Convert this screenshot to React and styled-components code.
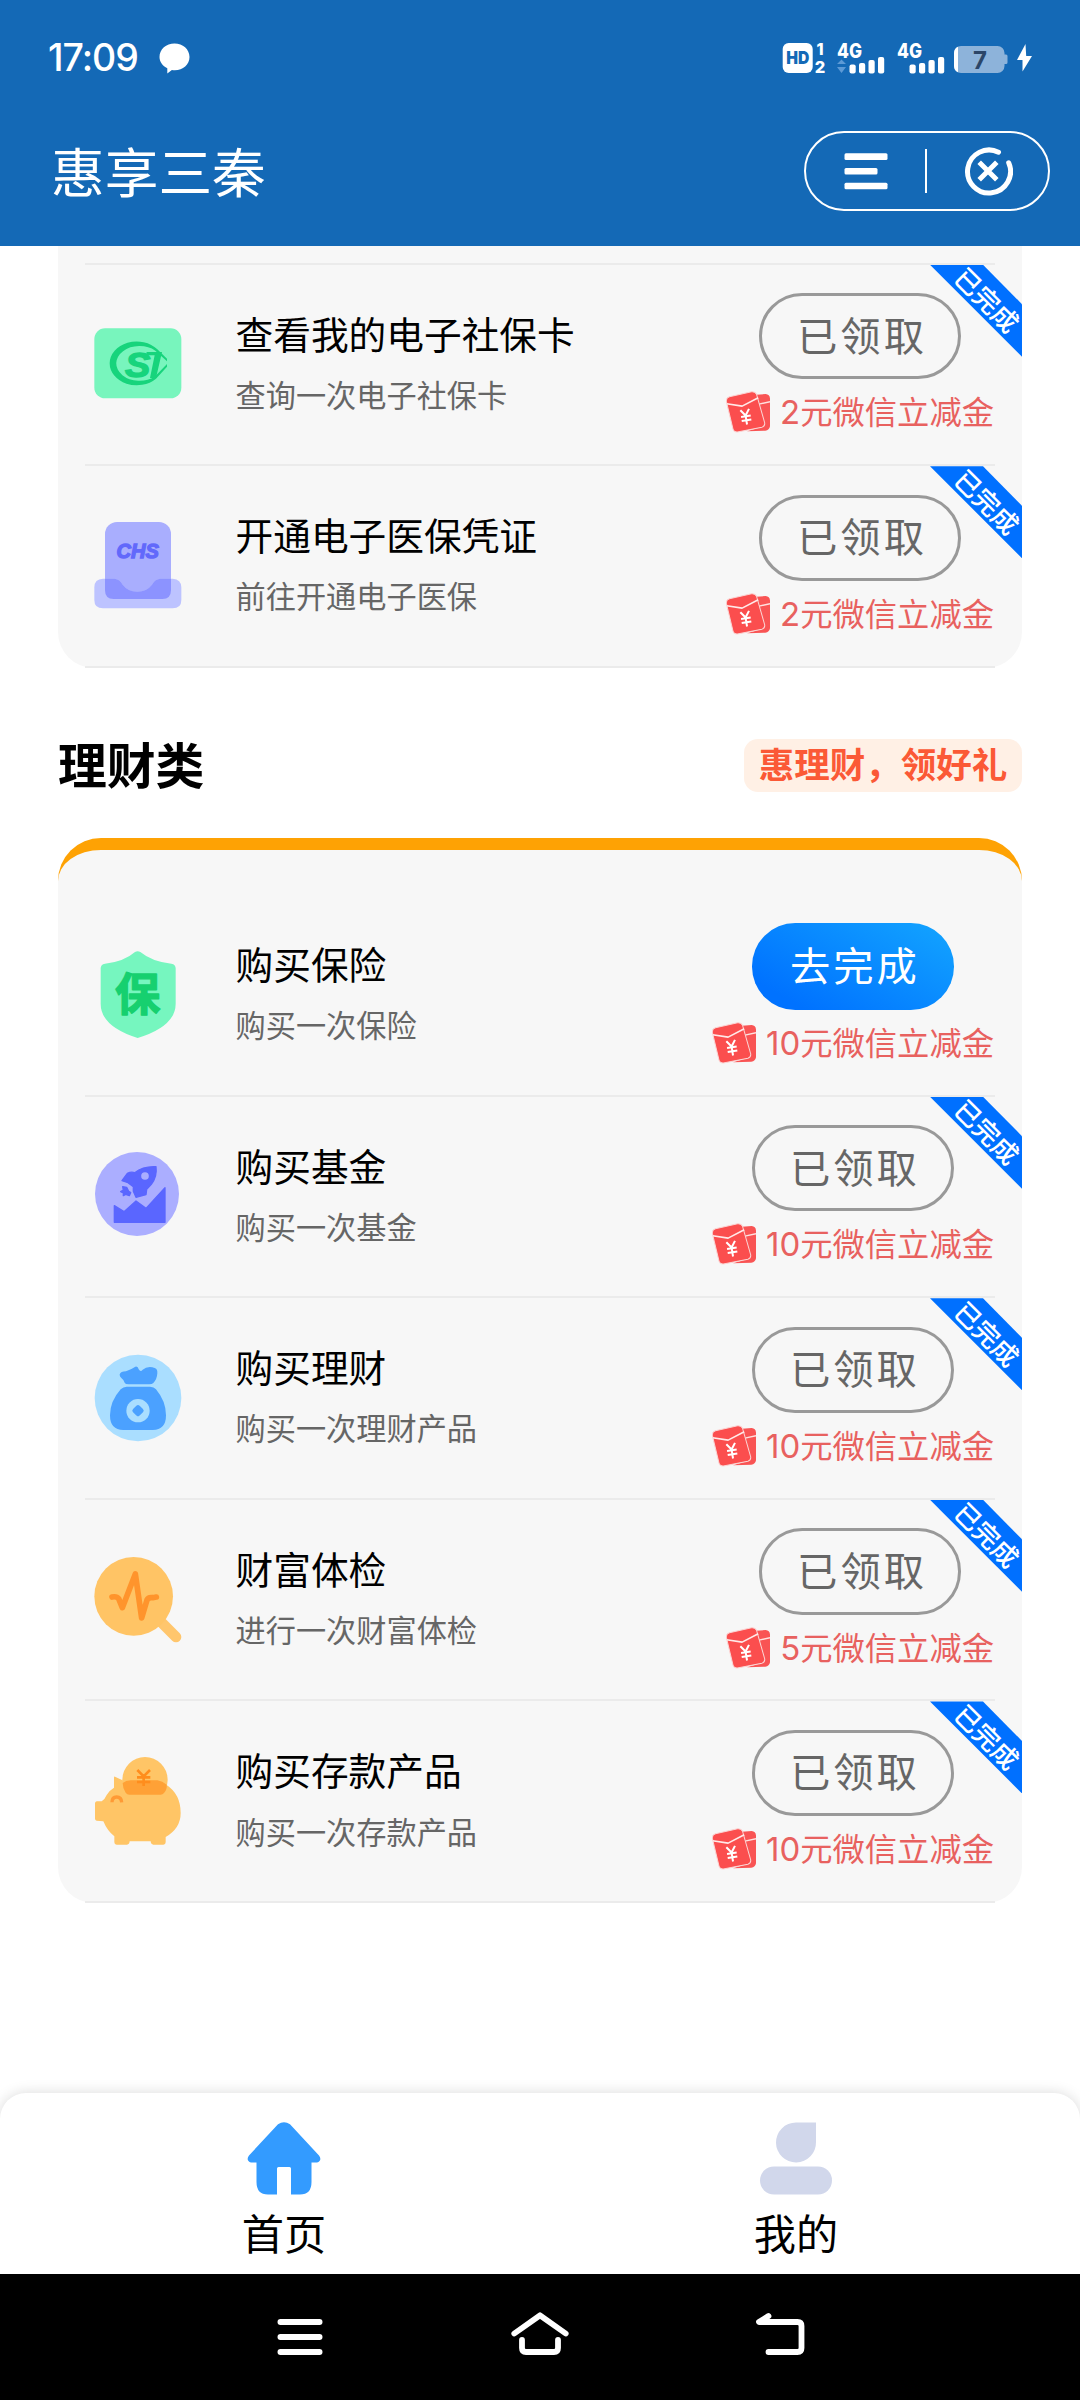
import React from "react";
import styled, { createGlobalStyle } from "styled-components";

const GlobalStyle = createGlobalStyle`
  * { box-sizing: border-box; }
  html, body { margin: 0; padding: 0; background: #fff; }
  body { font-family: "Noto Sans CJK SC", "Noto Sans", sans-serif; color: #000; }
  svg { display: block; flex: none; }
`;

const Screen = styled.div`
  width: 1080px;
  height: 2400px;
  display: flex;
  flex-direction: column;
  overflow: hidden;
  background: #fff;
`;

/* ---------- header ---------- */

const Header = styled.header`
  flex: none;
  height: 246px;
  background: #1469b6;
  color: #fff;
  display: flex;
  flex-direction: column;
`;

const StatusBar = styled.div`
  height: 116px;
  padding: 0 48px 0 48px;
  display: flex;
  align-items: center;
  justify-content: space-between;
`;

const StatusGroup = styled.div`
  display: flex;
  align-items: center;
  gap: ${(p) => p.$gap || 0}px;
`;

const Clock = styled.span`
  width: 91px;
  font: 500 37.5px/44px Inter, sans-serif;
  letter-spacing: -1px;
  white-space: nowrap;
`;

const TitleBar = styled.div`
  height: 130px;
  padding: 15px 30px 0 51px;
  display: flex;
  align-items: flex-start;
  justify-content: space-between;
`;

const AppTitle = styled.h1`
  margin: 0;
  padding-top: 1px;
  font-weight: 400;
  font-size: 53.7px;
  line-height: 76px;
`;

const Capsule = styled.div`
  width: 246px;
  height: 80px;
  border: 2px solid #fff;
  border-radius: 40px;
  display: flex;
  align-items: center;
  padding: 0 35px 0 38px;
  justify-content: space-between;
`;

const CapsuleDivider = styled.span`
  width: 2px;
  height: 44px;
  background: #fff;
`;

/* ---------- content ---------- */

const Content = styled.main`
  flex: 1;
  min-height: 0;
  padding: 0 58px;
  display: flex;
  flex-direction: column;
`;

const Card = styled.section`
  flex: none;
  background: #f7f7f7;
  padding-top: ${(p) => p.$top}px;
  border-radius: ${(p) => (p.$accent ? "43px 43px 36px 36px" : "0 0 36px 36px")};
  border-top: ${(p) => (p.$accent ? "12px solid #fea204" : "0")};
`;

const TopRule = styled.div`
  height: 2px;
  margin: 0 27px;
  background: #ebebeb;
`;

const SectionHead = styled.div`
  flex: none;
  height: 170px;
  padding-top: 26px;
  display: flex;
  align-items: center;
  justify-content: space-between;
`;

const SectionTitle = styled.h2`
  margin: -6px 0 0;
  font-size: 48.8px;
  line-height: 70px;
  font-weight: 700;
`;

const Slogan = styled.span`
  width: 278px;
  height: 53px;
  border-radius: 14px;
  background: #fff0e5;
  color: #fb5936;
  font-size: 35.5px;
  line-height: 48px;
  font-weight: 700;
  text-align: center;
  white-space: nowrap;
`;

const Row = styled.article`
  position: relative;
  height: 201.6px;
  padding: 0 27px;
`;

const RowBody = styled.div`
  height: 100%;
  padding: 0 1px 0 9px;
  border-bottom: 2px solid #ebebeb;
  display: flex;
  align-items: flex-start;
`;

const IconBox = styled.div`
  width: 88px;
  height: 88px;
  margin: 55.8px 53.5px 0 0;
`;

const TaskText = styled.div`
  flex: 1;
  padding-top: 41px;
  display: flex;
  flex-direction: column;
  gap: 12.2px;
  white-space: nowrap;
`;

const TaskTitle = styled.div`
  font-size: 37.7px;
  line-height: 54px;
`;

const TaskHint = styled.div`
  font-size: 30.2px;
  line-height: 44px;
  color: #666;
`;

const Action = styled.div`
  padding-top: 28.4px;
  display: flex;
  flex-direction: column;
  align-items: center;
`;

const Pill = styled.button`
  width: 202px;
  height: 86.4px;
  padding: 0 0 5px 4px;
  border-radius: 43.2px;
  border: ${(p) => (p.$done ? "3px solid #999" : "0")};
  background: ${(p) => (p.$done ? "transparent" : "linear-gradient(30deg, #0072ff 15%, #12a2ff 95%)")};
  color: ${(p) => (p.$done ? "#666" : "#fff")};
  font-family: inherit;
  font-size: 40.3px;
  line-height: 1;
  letter-spacing: 3px;
  display: flex;
  align-items: center;
  justify-content: center;
`;

const Reward = styled.div`
  margin-top: 10px;
  height: 46px;
  display: flex;
  align-items: center;
  gap: 10px;
  color: #e8615f;
  font-size: 32.3px;
  line-height: 46px;
  white-space: nowrap;
`;

const RewardText = styled.span`
  margin-top: -2px;
`;

const Amount = styled.span`
  font-family: Inter, sans-serif;
  font-size: 33px;
`;

const Ribbon = styled.div`
  position: absolute;
  top: 0;
  right: 0;
  width: 92px;
  height: 92px;
  display: flex;

  &::before {
    content: "";
    position: absolute;
    inset: 0;
    background: #0070ff;
    clip-path: polygon(0 0, 53px 0, 92px 39.5px, 92px 92px);
  }
`;

const RibbonLabel = styled.span`
  position: absolute;
  left: 16.8px;
  top: 16.5px;
  width: 80px;
  height: 38px;
  color: #fff;
  font-size: 26px;
  font-weight: 500;
  line-height: 36px;
  text-align: center;
  white-space: nowrap;
  transform: rotate(45deg);
`;

/* ---------- bottom bars ---------- */

const TabBar = styled.nav`
  flex: none;
  height: 181px;
  padding: 29px 28px 0;
  border-radius: 26px 26px 0 0;
  background: #fff;
  box-shadow: 0 0 14px rgba(0, 0, 0, 0.15);
  display: flex;
`;

const Tab = styled.a`
  flex: 1;
  display: flex;
  flex-direction: column;
  align-items: center;
  gap: 6.5px;
  font-size: 42.2px;
  line-height: 60px;
`;

const SystemBar = styled.footer`
  flex: none;
  height: 126px;
  background: #000;
  display: flex;
  justify-content: center;
  align-items: flex-start;
  gap: 180px;
  padding-top: 32px;
`;

/* ---------- drawings ---------- */

const ChatBubble = () => (
  <svg width="31" height="31" viewBox="0 0 31 31">
    <path fill="#fff" d="M15.500 .5C23.800 .5 30.500 6.300 30.500 14S24 27.200 15.800 27.200c-1 0-2-.1-2.900-.3L8.300 30.600V25.300C3.600 23 .5 18.800 .5 14 .5 6.300 7.200 .5 15.500 .5z" />
  </svg>
);

const HdBadge = () => (
  <svg width="48" height="50" viewBox="0 -8 48 50">
    <rect x="0.700" y="2" width="30" height="30" rx="6" fill="#fff" />
    <text x="15.700" y="23.300" textAnchor="middle" fontFamily="Inter" fontWeight="900" fontSize="17.500" textLength="23" lengthAdjust="spacingAndGlyphs" fill="#1469b6">HD</text>
    <text x="38" y="14" textAnchor="middle" fontFamily="Inter" fontWeight="800" fontSize="16" fill="#fff">1</text>
    <text x="38" y="31.800" textAnchor="middle" fontFamily="Inter" fontWeight="800" fontSize="16.500" fill="#fff">2</text>
  </svg>
);

const Signal = ({ data }) => (
  <svg width="50" height="50" viewBox="0 -8 50 50">
    <text x="0" y="17" fontFamily="Inter" fontWeight="800" fontSize="20.500" textLength="25" lengthAdjust="spacingAndGlyphs" fill="#fff">4G</text>
    <g fill="#fff">
      <rect x="12.500" y="23.500" width="6.200" height="9" rx="2" />
      <rect x="22" y="22" width="6.200" height="10.500" rx="2" />
      <rect x="31.500" y="19" width="6.200" height="13.500" rx="2" />
      <rect x="41" y="16" width="6.200" height="16.500" rx="2" />
    </g>
    {data && <path fill="#5d9ad6" d="M4.500 18.500l4.500 4.500H0zM4.500 32l4.500-6H0z" />}
  </svg>
);

const Battery = () => (
  <svg width="56" height="34" viewBox="0 0 56 34">
    <path fill="#8db3da" d="M7 5H43.500a7 7 0 0 1 7 7v1.500h1.500a1.500 1.500 0 0 1 1.500 1.500v6.500a1.500 1.500 0 0 1-1.500 1.500H50.500V25a7 7 0 0 1-7 7H7a7 7 0 0 1-7-7V12A7 7 0 0 1 7 5z" />
    <path fill="#fff" d="M4 5.700V31.300A7 7 0 0 1 0 25V12A7 7 0 0 1 4 5.700z" />
    <text x="26" y="27.500" textAnchor="middle" fontFamily="Inter" fontWeight="700" fontSize="24" fill="#2b4668">7</text>
  </svg>
);

const Bolt = () => (
  <svg width="15" height="28" viewBox="0 0 15 28">
    <path fill="#fff" d="M8.500 0L0 16h5.500v11.500L15 12H9.200z" />
  </svg>
);

const MenuLines = () => (
  <svg width="44" height="37" viewBox="0 0 44 37">
    <g fill="#fff">
      <rect x="0.500" y="0.300" width="43" height="6.600" rx="1.500" />
      <rect x="0.500" y="15" width="33" height="6.600" rx="1.500" />
      <rect x="0.500" y="29.700" width="43" height="6.600" rx="1.500" />
    </g>
  </svg>
);

const CloseRing = () => (
  <svg width="50" height="50" viewBox="0 0 50 50">
    <g fill="none" stroke="#fff" strokeWidth="5" strokeLinecap="round">
      <path d="M35.500 6.200A21.500 21.500 0 1 0 45.700 16.800" />
      <path strokeLinecap="butt" d="M16.200 16.200L33.800 33.800M33.800 16.200L16.200 33.800" />
    </g>
  </svg>
);

const Icon = ({ children }) => (
  <svg width="88" height="88" viewBox="0 0 264 264">{children}</svg>
);

const SocialCardIcon = () => (
  <Icon>
    <rect x="1" y="25" width="261" height="210" rx="32" fill="#78f5bd" />
    <path fill="#17d47c" fillRule="evenodd" d="M47 130A81 66 0 0 1 190 88L219 116V124L184 92A70 52 0 1 0 182 170L219 132V140L186 176A81 66 0 0 1 47 130z" />
    <text x="93" y="171" fontFamily="Liberation Sans" fontWeight="700" fontStyle="italic" fontSize="104" textLength="76" lengthAdjust="spacingAndGlyphs" stroke="#17d47c" strokeWidth="4" fill="#17d47c">S</text>
    <path fill="#17d47c" d="M158 96H204L186 174H168L182 106H156z" />
  </Icon>
);

const InsuranceTrayIcon = () => (
  <Icon>
    <rect x="33" y="0" width="198" height="231" rx="36" fill="#a9aefe" />
    <path fill="#bdc3ff" d="M27 170H62Q78 172 86 188Q102 209 130 209T174 188Q182 172 198 170H236Q262 172 262 196V234Q262 259 236 259H27Q1 259 1 234V196Q1 171 27 170z" />
    <path fill="#8c93ff" d="M33 170H62Q78 172 86 188Q102 209 130 209T174 188Q182 172 198 170H231V205Q231 231 205 231H59Q33 231 33 205z" />
    <text x="131" y="108" textAnchor="middle" fontFamily="Liberation Sans" fontWeight="700" fontStyle="italic" fontSize="60" stroke="#6269fb" strokeWidth="4" fill="#6269fb">CHS</text>
  </Icon>
);

const ShieldIcon = () => (
  <Icon>
    <path fill="#76f6bf" d="M123 3Q131-1 139 3Q174 32 232 38Q245 40 245 52V158Q245 226 131 261Q20 226 20 158V52Q20 40 33 38Q90 32 123 3z" />
    <text x="131" y="180" textAnchor="middle" fontFamily="Noto Sans CJK SC" fontWeight="700" fontSize="136" stroke="#16d06f" strokeWidth="4" strokeLinejoin="round" fill="#16d06f">保</text>
  </Icon>
);

const RocketIcon = () => (
  <Icon>
    <circle cx="129" cy="126" r="126" fill="#abaeff" />
    <g fill="#5a66ff" stroke="#5a66ff" strokeWidth="4" strokeLinejoin="round">
      <path d="M186 44Q190 74 172 97L158 112L156 128L126 136L118 118L118 104L102 92L84 86L100 64Q112 58 122 62Q148 42 186 44z" />
      <path d="M86 104L98 106L104 118L110 122L106 131L95 127L88 131L88 123L80 119L88 114z" />
      <path d="M61 161L90 179L126 147L156 169L213 107V211H61z" />
    </g>
    <circle cx="153" cy="72" r="11.500" fill="#abaeff" />
  </Icon>
);

const MoneyBagIcon = () => (
  <Icon>
    <circle cx="132" cy="132" r="130" fill="#aadeff" />
    <g fill="#4ba1ff">
      <path d="M77 61Q80 52 96 52Q112 46 124 38Q132 36 134 46Q140 56 146 47Q158 37 175 40Q192 42 190 58Q189 76 178 87Q174 91 166 91H104Q94 91 92 86Q90 78 82 72Q76 67 77 61z" />
      <path d="M98 98H168Q180 98 186 106Q216 142 216 184Q216 228 176 228H88Q48 228 48 184Q48 142 80 106Q88 98 98 98z" />
    </g>
    <circle cx="132" cy="170" r="35" fill="#aadeff" />
    <rect x="118" y="156" width="28" height="28" rx="7" fill="#4ba1ff" transform="rotate(45 132 170)" />
  </Icon>
);

const CheckupIcon = () => (
  <Icon>
    <path d="M196 193L246 243" stroke="#ffc66d" strokeWidth="32" strokeLinecap="round" />
    <circle cx="119" cy="121" r="118" fill="#ffc465" />
    <path fill="none" stroke="#ff942c" strokeWidth="17" strokeLinecap="round" strokeLinejoin="round" d="M54 123Q68 120 74 128L85 155L124 54L143 186L159 132Q163 123 176 125L187 123" />
  </Icon>
);

const PiggyIcon = () => (
  <Icon>
    <circle cx="153" cy="68" r="68" fill="#ffc566" />
    <path fill="#ffc566" d="M63 59L92 73Q100 70 116 70H180Q204 72 218 84Q260 112 260 168Q260 214 215 240V256Q215 263 208 263H178Q171 263 170 253H107Q106 263 99 263H68Q61 263 61 256V238Q40 222 28 193L8 191Q3 190 3 185V139Q3 134 8 133H23Q32 128 38 114Q46 100 60 92V62Q60 58 63 59z" />
    <path fill="#ffa136" d="M86 78Q96 70 110 70H190Q206 72 218 83Q220 97 210 108Q206 113 200 113H106Q99 113 95 107Q86 94 86 78z" />
    <g fill="none" stroke="#ff8d1d" strokeWidth="8">
      <path d="M130 39L149 58L168 39M129 61H169M129 75H169M149 57V87" />
      <path stroke="#ff9a35" strokeWidth="10" d="M54 136Q54 120 68 120T83 136" />
    </g>
  </Icon>
);

const PacketIcon = () => (
  <svg width="44" height="42" viewBox="0 0 131 123">
    <path fill="#f95454" d="M90 10L118 8Q130 9 131 21V104Q129 116 117 117L62 119L106 106Q114 102 112 92z" />
    <path stroke="#ffe1df" strokeWidth="4" fill="none" d="M98 38L131 31" />
    <path fill="#fb4e4e" stroke="#fbd5d4" strokeWidth="3" d="M10 16L76 1Q87 0 91 9L115 93Q117 103 107 107L34 121Q24 122 21 113L1 30Q0 19 10 16z" />
    <path stroke="#ffe9e8" strokeWidth="5" fill="none" strokeLinejoin="round" d="M2 37L48 44L96 19" />
    <g transform="rotate(-9 59 76)" stroke="#fff" strokeWidth="6" fill="none">
      <path d="M46 54L59 72L72 54M45 74H74M45 86H74M59 71V99" />
    </g>
  </svg>
);

const HomeTabIcon = () => (
  <svg width="74" height="73" viewBox="0 0 74 73">
    <path fill="#339bff" d="M31 2.300Q37 -2 43 2.300L72 33.500Q75.500 38.500 70 40.500H64.500V60Q64.500 72.500 53 72.500H44V46.500Q44 45 42.500 45H31.500Q30 45 30 46.500V72.500H21Q9.500 72.500 9.500 60V40.500H4Q-1.500 38.500 2 33.500z" />
  </svg>
);

const UserTabIcon = () => (
  <svg width="74" height="73" viewBox="0 0 74 73">
    <path fill="#d1d7eb" d="M37 .5H57V20A20 20 0 1 1 37 .5z" />
    <rect x="1" y="44.500" width="72" height="28" rx="14" fill="#d1d7eb" />
  </svg>
);

const RecentsKey = () => (
  <svg width="60" height="60" viewBox="0 0 60 60">
    <path stroke="#fff" strokeWidth="6" strokeLinecap="round" d="M10.500 16H49.500M10.500 31H49.500M10.500 46H49.500" />
  </svg>
);

const HomeKey = () => (
  <svg width="60" height="60" viewBox="0 0 60 60">
    <path fill="none" stroke="#fff" strokeWidth="5.800" strokeLinecap="round" strokeLinejoin="round" d="M4.300 27.500L30 9.300L55.700 27.500M12 34V42Q12 46 16 46H44Q48 46 48 42V34" />
  </svg>
);

const BackKey = () => (
  <svg width="60" height="60" viewBox="0 0 60 60">
    <path fill="none" stroke="#fff" strokeWidth="5.800" strokeLinecap="round" strokeLinejoin="round" d="M18.500 10L9 16H47.500Q51.500 16 51.500 20V42Q51.500 46 47.500 46H18.500" />
  </svg>
);

/* ---------- data ---------- */

const serviceTasks = [
  { title: "查看我的电子社保卡", hint: "查询一次电子社保卡", amount: 2, done: true, icon: <SocialCardIcon /> },
  { title: "开通电子医保凭证", hint: "前往开通电子医保", amount: 2, done: true, icon: <InsuranceTrayIcon /> },
];

const wealthTasks = [
  { title: "购买保险", hint: "购买一次保险", amount: 10, done: false, icon: <ShieldIcon /> },
  { title: "购买基金", hint: "购买一次基金", amount: 10, done: true, icon: <RocketIcon /> },
  { title: "购买理财", hint: "购买一次理财产品", amount: 10, done: true, icon: <MoneyBagIcon /> },
  { title: "财富体检", hint: "进行一次财富体检", amount: 5, done: true, icon: <CheckupIcon /> },
  { title: "购买存款产品", hint: "购买一次存款产品", amount: 10, done: true, icon: <PiggyIcon /> },
];

const TaskRow = ({ title, hint, amount, done, icon }) => (
  <Row>
    <RowBody>
      <IconBox>{icon}</IconBox>
      <TaskText>
        <TaskTitle>{title}</TaskTitle>
        <TaskHint>{hint}</TaskHint>
      </TaskText>
      <Action>
        <Pill $done={done}>{done ? "已领取" : "去完成"}</Pill>
        <Reward>
          <PacketIcon />
          <RewardText><Amount>{amount}</Amount>元微信立减金</RewardText>
        </Reward>
      </Action>
    </RowBody>
    {done && (
      <Ribbon>
        <RibbonLabel>已完成</RibbonLabel>
      </Ribbon>
    )}
  </Row>
);

export default function App() {
  return (
    <Screen>
      <GlobalStyle />
      <Header>
        <StatusBar>
          <StatusGroup $gap={20}>
            <Clock>17:09</Clock>
            <ChatBubble />
          </StatusGroup>
          <StatusGroup $gap={7}>
            <HdBadge />
            <StatusGroup $gap={10}>
              <Signal data />
              <Signal />
            </StatusGroup>
            <Battery />
            <Bolt />
          </StatusGroup>
        </StatusBar>
        <TitleBar>
          <AppTitle>惠享三秦</AppTitle>
          <Capsule>
            <MenuLines />
            <CapsuleDivider />
            <CloseRing />
          </Capsule>
        </TitleBar>
      </Header>
      <Content>
        <Card $top={16.7}>
          <TopRule />
          {serviceTasks.map((t) => <TaskRow key={t.title} {...t} />)}
        </Card>
        <SectionHead>
          <SectionTitle>理财类</SectionTitle>
          <Slogan>惠理财，领好礼</Slogan>
        </SectionHead>
        <Card $accent $top={45.2}>
          {wealthTasks.map((t) => <TaskRow key={t.title} {...t} />)}
        </Card>
      </Content>
      <TabBar>
        <Tab><HomeTabIcon />首页</Tab>
        <Tab><UserTabIcon />我的</Tab>
      </TabBar>
      <SystemBar>
        <RecentsKey />
        <HomeKey />
        <BackKey />
      </SystemBar>
    </Screen>
  );
}
